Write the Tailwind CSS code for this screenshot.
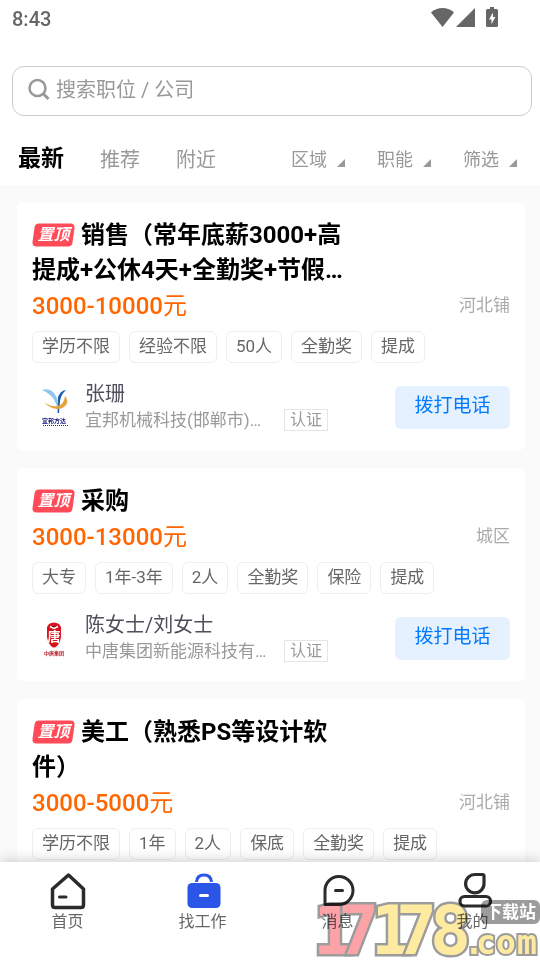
<!DOCTYPE html>
<html lang="zh-CN">

<head>
  <meta charset="UTF-8">
  <meta name="viewport" content="width=device-width, initial-scale=1.0">
  <title>找工作</title>
  <script src="https://cdn.jsdelivr.net/npm/@tailwindcss/browser@4"></script>
</head>

<body class="relative h-screen flex flex-col overflow-hidden bg-[#fafafa] text-black font-[Roboto,'Noto_Sans_CJK_SC',sans-serif]">
  <header class="bg-white">
    <!-- status bar -->
    <div class="flex items-center justify-between h-9 pl-3 pr-10 text-[#666]">
      <span class="pt-[2px] text-xl font-medium">8:43</span>
      <svg class="w-[70px] h-6" viewBox="0 0 70 24" fill="currentColor">
        <path d="M1 6.500C4 3.500 8 2 12.500 2S21 3.500 24 6.500L12.500 21Z"></path>
        <path d="M45 2V21H26Z"></path>
        <path fill-rule="evenodd" d="M60 1h4v2h2.500q1.500 0 1.500 1.500V19.500q0 1.500-1.500 1.500h-9q-1.500 0-1.500-1.500V4.500q0-1.500 1.500-1.500H60ZM63 6.500L59 13.500H61.500V18L65.500 11H63Z"></path>
      </svg>
    </div>
    <form class="mt-[30px] ml-3 mr-2 flex items-center h-[50px] pl-[14px] border border-[#ccc] rounded-xl">
      <label for="search" class="mr-1 pb-1">
        <svg class="w-[25px] h-[25px]" fill="none" stroke="#999" stroke-width="2.500" viewBox="0 0 25 25">
          <circle cx="10.500" cy="11" r="8"></circle>
          <path stroke-width="3" d="M16 16.500l5.500 5.500"></path>
        </svg>
      </label>
      <input type="search" id="search" aria-label="搜索" placeholder="搜索职位 / 公司"
        class="flex-1 min-w-0 h-11 pb-[2px] text-xl outline-none placeholder:text-[#999]">
    </form>
    <nav class="flex items-center justify-between h-[69px] pt-5 pb-[2px] pl-[18px] pr-[23px] text-[#999]">
      <div class="flex items-center gap-9 text-xl">
        <a href="#" class="text-[23px] font-bold text-black">最新</a>
        <a href="#">推荐</a>
        <a href="#">附近</a>
      </div>
      <div class="flex items-center gap-8 text-lg">
        <button class="flex items-end gap-[10px]">区域
          <svg class="w-2 h-2 mb-[7px]" viewBox="0 0 8 8" fill="currentColor"><path d="M8 0V8H0Z"></path></svg>
        </button>
        <button class="flex items-end gap-[10px]">职能
          <svg class="w-2 h-2 mb-[7px]" viewBox="0 0 8 8" fill="currentColor"><path d="M8 0V8H0Z"></path></svg>
        </button>
        <button class="flex items-end gap-[10px]">筛选
          <svg class="w-2 h-2 mb-[7px]" viewBox="0 0 8 8" fill="currentColor"><path d="M8 0V8H0Z"></path></svg>
        </button>
      </div>
    </nav>
  </header>

  <!-- job list -->
  <main class="flex-1 min-h-0 overflow-y-auto [scrollbar-width:none] flex flex-col gap-[18px] pt-[17px] pl-[17px] pr-[15px]">
    <article class="shrink-0 bg-white rounded-md px-[15px] pt-4 pb-[17px]">
      <h2 class="max-w-[328px] line-clamp-2 text-2xl leading-[35px] font-bold">
        <span class="relative inline-flex items-center justify-center w-[43px] h-6 mr-[6px] align-[3px] text-base leading-6 italic text-white">
          <svg class="absolute inset-0 w-full h-full" viewBox="0 0 43 24" fill="#ff4b57"><path d="M7 0.500H38.500Q43 0.500 42.500 5L40.500 19.500Q40 23.500 36 23.500H4.500Q0 23.500 0.500 19L2.500 4.500Q3 0.500 7 0.500Z"></path></svg>
          <span class="relative">置顶</span></span>销售（常年底薪3000+高提成+公休4天+全勤奖+节假日福利
      </h2>
      <div class="flex items-center justify-between h-[35px]">
        <p class="text-2xl text-[#ff6600]"><span class="font-medium">3000-10000</span>元</p>
        <p class="text-[17px] text-[#aaa]">河北铺</p>
      </div>
      <ul class="mt-2 flex gap-[9px] text-[17px] leading-7 text-[#666]">
        <li class="h-8 px-[9px] border border-[#eee] rounded-md">学历不限</li>
        <li class="h-8 px-[9px] border border-[#eee] rounded-md">经验不限</li>
        <li class="h-8 px-[9px] border border-[#eee] rounded-md">50人</li>
        <li class="h-8 px-[9px] border border-[#eee] rounded-md">全勤奖</li>
        <li class="h-8 px-[9px] border border-[#eee] rounded-md">提成</li>
      </ul>
      <div class="mt-[18px] flex items-center h-[52px]">
        <svg class="w-11 h-11 shrink-0" viewBox="0 0 44 44">
          <path fill="#8fc5e8" d="M10 5Q17 3 21 7Q25 11 26 18Q27 7 34 5L31 8Q28 13 27 20L25 21Q22 13 18 10Q15 7 10 5Z"></path>
          <path fill="#1d5fa8" d="M26 12Q28 6 34 5Q29 9 28 16L27 28H25.500Q26 20 26 12Z"></path>
          <path fill="#e5a43b" d="M12 17Q18 22 25 21Q32 20 33 11Q37 16 34 20Q31 24 25 24Q17 23 12 17Z"></path>
          <text x="10" y="38" font-size="6" font-weight="700" fill="#15157a">宜邦方达</text>
          <path stroke="#333" stroke-dasharray="1 1" d="M11 40.500H36"></path>
        </svg>
        <div class="ml-[9px] flex-1 min-w-0">
          <p class="text-xl leading-[26px] text-[#4f4f5c]">张珊</p>
          <div class="flex items-center">
            <p class="w-[187px] truncate text-[17px] leading-[26px] text-[#999]">宜邦机械科技(邯郸市)有限公司</p>
            <span class="ml-3 px-[5px] h-[22px] border border-[#e5e5e5] text-base leading-5 text-[#999]">认证</span>
          </div>
        </div>
        <button class="w-[115px] h-[43px] pb-[2px] rounded-md bg-[#e5f1ff] text-[19px] text-[#007aff]">拨打电话</button>
      </div>
    </article>

    <article class="shrink-0 bg-white rounded-md px-[15px] pt-4 pb-[17px]">
      <h2 class="max-w-[328px] line-clamp-2 text-2xl leading-[35px] font-bold">
        <span class="relative inline-flex items-center justify-center w-[43px] h-6 mr-[6px] align-[3px] text-base leading-6 italic text-white">
          <svg class="absolute inset-0 w-full h-full" viewBox="0 0 43 24" fill="#ff4b57"><path d="M7 0.500H38.500Q43 0.500 42.500 5L40.500 19.500Q40 23.500 36 23.500H4.500Q0 23.500 0.500 19L2.500 4.500Q3 0.500 7 0.500Z"></path></svg>
          <span class="relative">置顶</span></span>采购
      </h2>
      <div class="flex items-center justify-between h-[35px]">
        <p class="text-2xl text-[#ff6600]"><span class="font-medium">3000-13000</span>元</p>
        <p class="text-[17px] text-[#aaa]">城区</p>
      </div>
      <ul class="mt-2 flex gap-[9px] text-[17px] leading-7 text-[#666]">
        <li class="h-8 px-[9px] border border-[#eee] rounded-md">大专</li>
        <li class="h-8 px-[9px] border border-[#eee] rounded-md">1年-3年</li>
        <li class="h-8 px-[9px] border border-[#eee] rounded-md">2人</li>
        <li class="h-8 px-[9px] border border-[#eee] rounded-md">全勤奖</li>
        <li class="h-8 px-[9px] border border-[#eee] rounded-md">保险</li>
        <li class="h-8 px-[9px] border border-[#eee] rounded-md">提成</li>
      </ul>
      <div class="mt-[18px] flex items-center h-[52px]">
        <svg class="w-11 h-11 shrink-0" viewBox="0 0 44 44">
          <path fill="#d7141d" d="M17 8Q22 5 27 8L29 11V21Q28 27 25 30Q22 33 19 30Q16 27 15 21V11Z"></path>
          <text x="15.500" y="25" font-size="13" font-weight="700" fill="#fff">唐</text>
          <path stroke="#fff" stroke-width="1.500" d="M18 10.500l4 2 4-2"></path>
          <text x="12" y="39" font-size="5" font-weight="700" fill="#b3202a">中唐集团</text>
        </svg>
        <div class="ml-[9px] flex-1 min-w-0">
          <p class="text-xl leading-[26px] text-[#4f4f5c]">陈女士/刘女士</p>
          <div class="flex items-center">
            <p class="w-[187px] truncate text-[17px] leading-[26px] text-[#999]">中唐集团新能源科技有限公司</p>
            <span class="ml-3 px-[5px] h-[22px] border border-[#e5e5e5] text-base leading-5 text-[#999]">认证</span>
          </div>
        </div>
        <button class="w-[115px] h-[43px] pb-[2px] rounded-md bg-[#e5f1ff] text-[19px] text-[#007aff]">拨打电话</button>
      </div>
    </article>

    <article class="shrink-0 bg-white rounded-md px-[15px] pt-4 pb-[17px]">
      <h2 class="max-w-[328px] line-clamp-2 text-2xl leading-[35px] font-bold">
        <span class="relative inline-flex items-center justify-center w-[43px] h-6 mr-[6px] align-[3px] text-base leading-6 italic text-white">
          <svg class="absolute inset-0 w-full h-full" viewBox="0 0 43 24" fill="#ff4b57"><path d="M7 0.500H38.500Q43 0.500 42.500 5L40.500 19.500Q40 23.500 36 23.500H4.500Q0 23.500 0.500 19L2.500 4.500Q3 0.500 7 0.500Z"></path></svg>
          <span class="relative">置顶</span></span>美工（熟悉PS等设计软件）
      </h2>
      <div class="flex items-center justify-between h-[35px]">
        <p class="text-2xl text-[#ff6600]"><span class="font-medium">3000-5000</span>元</p>
        <p class="text-[17px] text-[#aaa]">河北铺</p>
      </div>
      <ul class="mt-2 flex gap-[9px] text-[17px] leading-7 text-[#666]">
        <li class="h-8 px-[9px] border border-[#eee] rounded-md">学历不限</li>
        <li class="h-8 px-[9px] border border-[#eee] rounded-md">1年</li>
        <li class="h-8 px-[9px] border border-[#eee] rounded-md">2人</li>
        <li class="h-8 px-[9px] border border-[#eee] rounded-md">保底</li>
        <li class="h-8 px-[9px] border border-[#eee] rounded-md">全勤奖</li>
        <li class="h-8 px-[9px] border border-[#eee] rounded-md">提成</li>
      </ul>
    </article>
  </main>

  <!-- tab bar -->
  <nav class="relative grid grid-cols-4 h-[98px] pt-[9px] bg-white text-base leading-[22px] text-[#666] shadow-[0_-2px_12px_rgba(0,0,0,0.18)]">
    <a href="#" class="flex flex-col items-center">
      <svg class="w-10 h-10" viewBox="0 0 40 40" fill="none" stroke="#2b2b2b" stroke-width="3.500" stroke-linecap="round" stroke-linejoin="round">
        <path d="M20.500 4L35.500 18V34Q35.500 36.500 33 36.500H7Q4.500 36.500 4.500 34V18Z"></path>
        <path stroke-width="3" d="M11.500 26H18"></path>
      </svg>
      首页
    </a>
    <a href="#" class="flex flex-col items-center">
      <svg class="w-10 h-10" viewBox="0 0 40 40" fill="none" stroke-width="3">
        <path stroke="#2b55e6" d="M13.500 11Q14 4 21 4T28.500 11"></path>
        <rect x="4.500" y="12" width="33" height="25" rx="4.500" fill="#2b55e6"></rect>
        <path stroke="#fff" stroke-linecap="round" d="M17.500 24.500H24.500"></path>
      </svg>
      找工作
    </a>
    <a href="#" class="flex flex-col items-center">
      <svg class="w-10 h-10" viewBox="0 0 40 40" fill="none" stroke="#2b2b2b" stroke-width="3" stroke-linecap="round" stroke-linejoin="round">
        <path d="M7 33.500V20A14 14 0 1 1 21 33.500Z"></path>
        <path d="M17.500 19.500H24.500"></path>
      </svg>
      消息
    </a>
    <a href="#" class="flex flex-col items-center">
      <svg class="w-10 h-10" viewBox="0 0 40 40" fill="none" stroke="#2b2b2b" stroke-width="3.200" stroke-linejoin="round">
        <path d="M22 3.500H29.500Q31 3.500 31 5V12.500A9.200 9.200 0 1 1 22 3.500Z"></path>
        <rect x="7" y="25.500" width="30.500" height="9.500" rx="4.500"></rect>
      </svg>
      我的
    </a>
  </nav>

  <!-- download site stamp, lies over the tab bar -->
  <svg class="absolute right-0 bottom-0 w-[225px] h-[62px] pointer-events-none mix-blend-multiply" viewBox="0 0 225 62"
    font-family="'DejaVu Sans Mono',monospace" font-weight="700">
    <g stroke="#9c9c9c" stroke-width="5" stroke-linejoin="miter" paint-order="stroke">
      <g font-size="68">
        <text y="56" fill="#fda3a8"><tspan x="-2">1</tspan><tspan x="23">7</tspan></text>
        <text y="56" fill="#feeba0"><tspan x="56">1</tspan><tspan x="81">7</tspan><tspan x="115">8</tspan></text>
      </g>
      <text y="56" font-size="33" stroke-width="4" fill="#feeba0"><tspan x="149">.</tspan><tspan x="161">c</tspan><tspan x="181">o</tspan><tspan x="202">m</tspan></text>
    </g>
    <rect x="166" y="2" width="59" height="24" rx="6" fill="#9c9c9c"></rect>
    <text x="170" y="20" font-size="17" fill="#fff" font-family="'Noto Sans CJK SC',sans-serif">下载站</text>
  </svg>
</body>

</html>
